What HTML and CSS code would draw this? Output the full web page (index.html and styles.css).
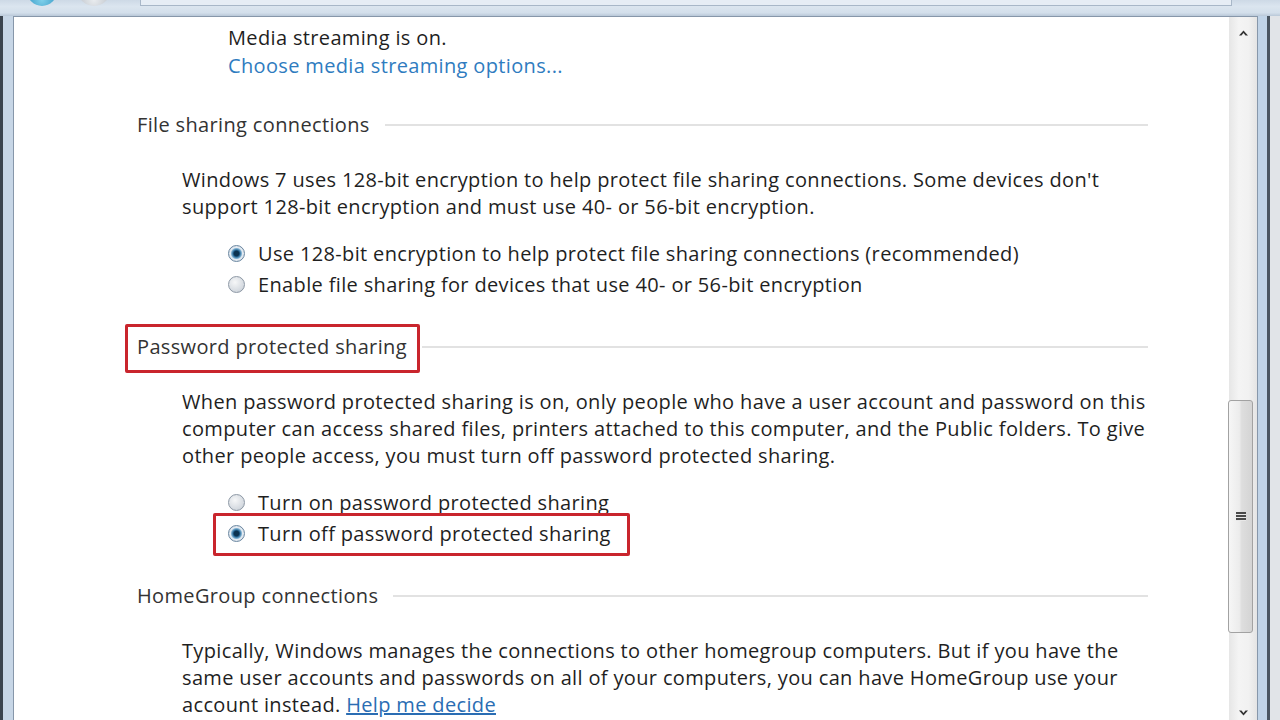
FILE: index.html
```html
<!DOCTYPE html>
<html lang="en">
<head>
    <meta charset="UTF-8">
    <meta name="viewport" content="width=device-width, initial-scale=1.0">
    <title>Advanced sharing settings</title>
    <link rel="stylesheet" href="styles.css">
</head>
<body>

<div class="window">
    <div class="chrome">
        <span class="nav-btn back"></span>
        <span class="nav-btn forward"></span>
        <span class="address"></span>
    </div>

    <div class="frame">
        <div class="edge-left"></div>

        <div class="pane">
            <div class="content">
                <div class="intro">
                    <div>Media streaming is on.</div>
                    <a class="link" href="#">Choose media streaming options...</a>
                </div>

                <section class="group">
                    <h3 class="group-title"><span>File sharing connections</span></h3>
                    <p>Windows 7 uses 128-bit encryption to help protect file sharing connections. Some devices don't<br>
                    support 128-bit encryption and must use 40- or 56-bit encryption.</p>
                    <ul class="options">
                        <li><span class="radio checked"></span>Use 128-bit encryption to help protect file sharing connections (recommended)</li>
                        <li><span class="radio"></span>Enable file sharing for devices that use 40- or 56-bit encryption</li>
                    </ul>
                </section>

                <section class="group">
                    <h3 class="group-title"><span class="marked">Password protected sharing</span></h3>
                    <p>When password protected sharing is on, only people who have a user account and password on this<br>
                    computer can access shared files, printers attached to this computer, and the Public folders. To give<br>
                    other people access, you must turn off password protected sharing.</p>
                    <ul class="options">
                        <li><span class="radio"></span>Turn on password protected sharing</li>
                        <li class="marked"><span class="radio checked"></span>Turn off password protected sharing</li>
                    </ul>
                </section>

                <section class="group">
                    <h3 class="group-title"><span>HomeGroup connections</span></h3>
                    <p>Typically, Windows manages the connections to other homegroup computers. But if you have the<br>
                    same user accounts and passwords on all of your computers, you can have HomeGroup use your<br>
                    account instead. <a class="link underline" href="#">Help me decide</a></p>
                </section>
            </div>

            <div class="scrollbar">
                <div class="sb-button">
                    <svg width="9" height="6" viewBox="0 0 9 6"><path d="M0 5.5 L4.5 0.5 L9 5.5 L6.5 5.5 L4.5 3 L2.5 5.5 Z" fill="#333"/></svg>
                </div>
                <div class="sb-track">
                    <div class="sb-thumb">
                        <span class="grip"></span>
                    </div>
                </div>
                <div class="sb-button down">
                    <svg width="9" height="6" viewBox="0 0 9 6"><path d="M0 0.5 L4.5 5.5 L9 0.5 L6.5 0.5 L4.5 3 L2.5 0.5 Z" fill="#333"/></svg>
                </div>
            </div>
        </div>

        <div class="edge-right"></div>
    </div>
</div>

</body>
</html>
```
FILE: styles.css
```css
/* General Styles */
body {
    margin: 0;
    width: 1280px;
    height: 720px;
    overflow: hidden;
    background-color: #cfdbe8;
    font-family: "Open Sans", "Noto Sans", sans-serif;
    font-size: 20px;
    letter-spacing: 0.35px;
    color: #1f1f1f;
}

.window {
    display: flex;
    flex-direction: column;
    height: 720px;
}

/* Window chrome */
.chrome {
    height: 16px;
    flex: none;
    display: flex;
    overflow: hidden;
    background: linear-gradient(#cdd9e6, #dbe5ef 40%, #d3dfeb 80%, #b9c8d8);
}

.nav-btn {
    width: 30px;
    height: 30px;
    margin-top: -24px;
    border-radius: 50%;
    flex: none;
}

.nav-btn.back {
    margin-left: 27px;
    background: radial-gradient(circle at 50% 80%, #7fd0ea, #2b8fbf 70%, #1d5f86);
}

.nav-btn.forward {
    margin-left: 21px;
    width: 32px;
    background: radial-gradient(circle at 50% 80%, #e9ecef, #b8bec6 70%, #8c949e);
}

.address {
    margin-left: 30px;
    width: 1090px;
    height: 5px;
    background: #e6edf5;
    border: 1px solid #a8b7c8;
    border-top: none;
}

.frame {
    flex: 1;
    display: flex;
    min-height: 0;
}

.edge-left {
    width: 13px;
    flex: none;
    box-sizing: border-box;
    border-left: 3px solid #3b444e;
    background: #c7d6e6;
}

.edge-right {
    width: 22px;
    flex: none;
    background: linear-gradient(to right, #c0d3e7 0 9px, #4a5561 9px 12px, #e1e4e8 12px);
}

.pane {
    flex: 1;
    display: flex;
    background: #fff;
    border: 1px solid #8797aa;
    border-bottom: none;
}

/* Content */
.content {
    flex: 1;
    padding: 7px 81px 0 0;
}

.intro {
    padding-left: 214px;
    line-height: 28px;
    margin-bottom: 31px;
}

.link {
    color: #2f7cbf;
    text-decoration: none;
}

.link.underline {
    color: #2a6db3;
    text-decoration: underline;
}

.group-title {
    display: flex;
    align-items: center;
    margin: 0 0 28px 123px;
    font-size: 20px;
    font-weight: normal;
    line-height: 27px;
    color: #333333;
}

.group-title::after {
    content: "";
    flex: 1;
    height: 2px;
    margin-left: 15px;
    background: #e2e2e2;
}

.group p {
    margin: 0 0 18px 168px;
    line-height: 27px;
}

.options {
    list-style: none;
    margin: 0 0 33px 214px;
    padding: 0;
    display: flex;
    flex-direction: column;
    align-items: flex-start;
}

.options li {
    display: flex;
    align-items: center;
    gap: 13px;
    height: 31px;
}

.radio {
    width: 17px;
    height: 17px;
    flex: none;
    box-sizing: border-box;
    border-radius: 50%;
    border: 1px solid #8d98a5;
    background: radial-gradient(circle at 40% 35%, #f6f7f8, #d6dbe1 65%, #bfc6cf);
}

.radio.checked {
    border-color: #6a86a0;
    background: radial-gradient(circle, #0c3350 0 2.5px, #2a6a98 3.5px, #7fb0d0 5px, #e4ebf2 6px, #cfd8e2);
}

/* Red callout boxes */
.marked {
    position: relative;
}

.group-title .marked::after {
    content: "";
    position: absolute;
    top: -9px;
    bottom: -13px;
    left: -12px;
    right: -13px;
    border: 3px solid #c9252d;
    border-radius: 2px;
}

.options li.marked::after {
    content: "";
    position: absolute;
    top: -5px;
    bottom: -7px;
    left: -15px;
    right: -19px;
    border: 3px solid #c9252d;
    border-radius: 2px;
}

/* Scrollbar */
.scrollbar {
    width: 28px;
    flex: none;
    display: flex;
    flex-direction: column;
    background: linear-gradient(to right, #e6e6e6, #f4f4f4 35%, #f1f1f1 70%, #e4e4e4);
}

.sb-button {
    height: 32px;
    display: flex;
    align-items: center;
    justify-content: center;
    flex: none;
}

.sb-button.down {
    height: 22px;
    align-items: flex-start;
    padding-top: 12px;
    box-sizing: border-box;
}

.sb-track {
    flex: 1;
    padding-top: 351px;
}

.sb-thumb {
    width: 25px;
    height: 233px;
    margin-left: -1px;
    box-sizing: border-box;
    border: 1px solid #a2a2a2;
    border-radius: 3px;
    background: linear-gradient(to right, #f6f6f6, #ececec 45%, #dedede 55%, #d4d4d4);
    display: flex;
    align-items: center;
    justify-content: center;
}

.grip {
    width: 10px;
    height: 9px;
    background: repeating-linear-gradient(#4a4a4a 0 2px, #e8e8e8 2px 3px);
}
```
